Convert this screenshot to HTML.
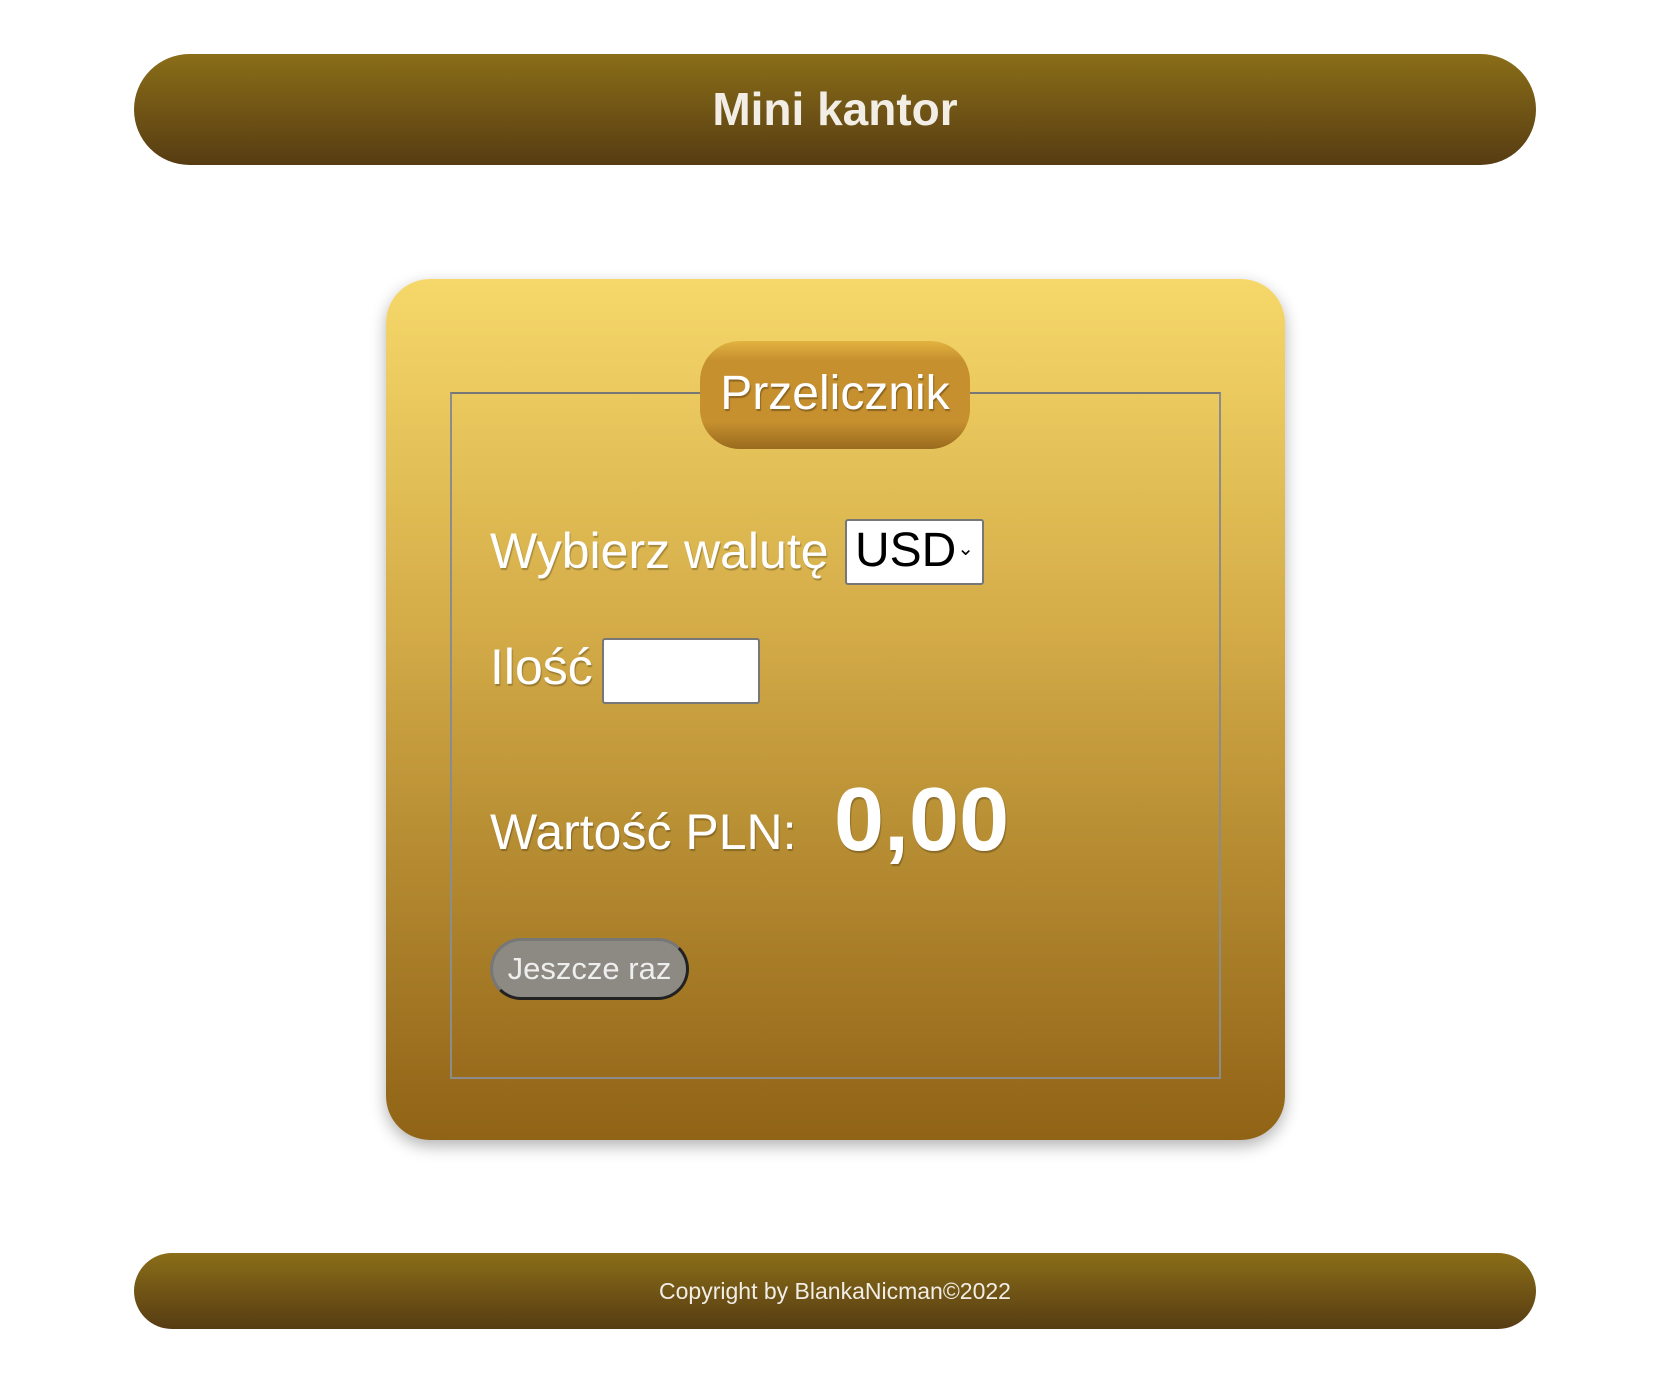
<!DOCTYPE html>
<html><head><meta charset="utf-8"><style>
*{box-sizing:border-box;margin:0;padding:0}
body{width:1668px;height:1386px;background:#fff;font-family:"Liberation Sans",sans-serif;position:relative;overflow:hidden}
.bar{position:absolute;left:134px;width:1402px;border-radius:60px;background:linear-gradient(#8a6e18,#573c13);color:#f2eee6;text-align:center}
#hdr{top:54px;height:111px;font-size:46px;font-weight:bold;line-height:111px}
#ftr{top:1253px;height:76px;font-size:23px;line-height:76px}
.card{position:absolute;left:386px;top:279px;width:899px;height:861px;border-radius:44px;background:linear-gradient(#f6d86a,#d4ac48 40%,#906316);box-shadow:0 6px 16px rgba(0,0,0,.3)}
.fs{position:absolute;left:64px;top:113px;width:771px;height:687px;border:2px solid #8c8c8c;border-top-color:#777}
.legend{position:absolute;left:314px;top:62px;width:270px;height:108px;border-radius:40px;background:linear-gradient(#e2b340 0%,#c6902f 18%,#c6902f 75%,#9a6a1e);color:#fff;font-size:48px;text-align:center;line-height:106px;text-shadow:1px 2px 1px rgba(0,0,0,.3)}
.t{position:absolute;color:#fff;text-shadow:1px 2px 1px rgba(0,0,0,.25);white-space:nowrap}
.box{position:absolute;background:#fff;border:2px solid #777;border-radius:3px}
</style></head><body>
<div id="hdr" class="bar">Mini kantor</div>
<div class="card">
<div class="fs"></div>
<div class="legend">Przelicznik</div>
<div class="t" style="left:104px;top:243px;font-size:50px">Wybierz walutę</div>
<div class="box" style="left:459px;top:240px;width:139px;height:66px;font-size:48px;line-height:60px;color:#000;padding-left:8px">USD<span style="position:absolute;right:8px;top:-2px;font-size:20px">&#8964;</span></div>
<div class="t" style="left:104px;top:359px;font-size:50px">Ilość</div>
<div class="box" style="left:216px;top:359px;width:158px;height:66px"></div>
<div class="t" style="left:104px;top:524px;font-size:50px">Wartość PLN:</div>
<div class="t" style="left:448px;top:490px;font-size:90px;font-weight:bold">0,00</div>
<div style="position:absolute;left:104px;top:659px;width:199px;height:62px;border-radius:31px;background:#8c8a83;border:3px solid;border-color:#777 #222 #222 #777;color:#eee;font-size:31px;line-height:55px;text-align:center">Jeszcze raz</div>
</div>
<div id="ftr" class="bar">Copyright by BlankaNicman©2022</div>
</body></html>
